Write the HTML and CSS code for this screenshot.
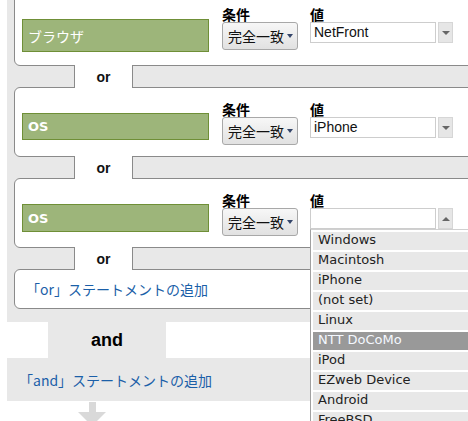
FILE: index.html
```html
<!DOCTYPE html>
<html lang="ja">
<head>
<meta charset="utf-8">
<link rel="stylesheet" href="styles.css">
</head>
<body>
<div class="page">
  <div class="panel">
    <div class="card card-first">
      <div class="attr attr-tall">ブラウザ</div>
      <div class="field cond"><div class="label">条件</div><div class="select">完全一致<span class="caret"></span></div></div>
      <div class="field value"><div class="label">値</div><div class="combo"><div class="input">NetFront</div><div class="toggle"><span class="tri-down"></span></div></div></div>
    </div>
    <div class="sep"><div class="sep-l"></div><div class="sep-m">or</div><div class="sep-r"></div></div>
    <div class="card">
      <div class="attr attr-short">OS</div>
      <div class="field cond"><div class="label">条件</div><div class="select">完全一致<span class="caret"></span></div></div>
      <div class="field value"><div class="label">値</div><div class="combo"><div class="input">iPhone</div><div class="toggle"><span class="tri-down"></span></div></div></div>
    </div>
    <div class="sep"><div class="sep-l"></div><div class="sep-m">or</div><div class="sep-r"></div></div>
    <div class="card">
      <div class="attr">OS</div>
      <div class="field cond"><div class="label">条件</div><div class="select">完全一致<span class="caret"></span></div></div>
      <div class="field value"><div class="label">値</div><div class="combo"><div class="input"></div><div class="toggle"><span class="tri-up"></span></div></div>
        <ul class="list">
          <li>Windows</li>
          <li>Macintosh</li>
          <li>iPhone</li>
          <li>(not set)</li>
          <li>Linux</li>
          <li class="active">NTT DoCoMo</li>
          <li>iPod</li>
          <li>EZweb Device</li>
          <li>Android</li>
          <li>FreeBSD</li>
        </ul>
      </div>
    </div>
    <div class="sep"><div class="sep-l"></div><div class="sep-m">or</div><div class="sep-r"></div></div>
    <div class="card card-add">「or」ステートメントの追加</div>
  </div>
  <div class="and-row"><div class="and-tab">and</div></div>
  <div class="add-and">「and」ステートメントの追加</div>
  <svg class="arrow" width="28" height="22" viewBox="0 0 28 22"><rect x="11" y="0" width="7" height="10" fill="#d9d9d9"/><polygon points="0,10 28,10 14,24" fill="#d9d9d9"/></svg>
</div>
</body>
</html>
```

FILE: styles.css
```css
html, body {
  margin: 0;
  padding: 0;
  background: #ffffff;
  overflow: hidden;
}
.page {
  width: 468px;
  height: 421px;
  overflow: hidden;
  font-family: "DejaVu Sans", "Noto Sans CJK JP", sans-serif;
}
.panel {
  margin-left: 7px;
  margin-top: -9px;
  width: 540px;
  padding: 0 0 13px 7px;
  background: #e8e8e8;
}
.card {
  background: #ffffff;
  border: 1px solid #8a8a8a;
  border-radius: 6px;
  display: flex;
  align-items: flex-start;
  padding: 11px 0 11px 7px;
}
.card-first {
  padding-top: 12px;
  padding-bottom: 13px;
}
.attr {
  box-sizing: border-box;
  width: 187px;
  height: 28px;
  margin-top: 14px;
  background: #9db57a;
  border: 1px solid #6f8f37;
  color: #ffffff;
  font: bold 13px "DejaVu Sans", "Noto Sans CJK JP", sans-serif;
  padding-left: 5px;
  display: flex;
  align-items: center;
}
.attr-tall {
  height: 33px;
  margin-top: 15px;
  font-weight: normal;
  font-size: 14px;
}
.attr-short {
  height: 27px;
}
.field {
  display: flex;
  flex-direction: column;
}
.cond {
  margin-left: 13px;
  width: 76px;
}
.value {
  margin-left: 12px;
  position: relative;
}
.label {
  height: 16px;
  line-height: 16px;
  margin-bottom: 2px;
  font: bold 14px "Noto Sans CJK JP", sans-serif;
  color: #000;
}
.select {
  box-sizing: border-box;
  height: 28px;
  border: 1px solid #a8a8a8;
  border-radius: 3px;
  background: linear-gradient(#f7f7f7, #e1e1e1);
  font: 14px "Noto Sans CJK JP", sans-serif;
  color: #111;
  padding-left: 5px;
  display: flex;
  align-items: center;
}
.caret {
  width: 0;
  height: 0;
  border-left: 3px solid transparent;
  border-right: 3px solid transparent;
  border-top: 4px solid #34456a;
  margin-left: 3px;
}
.combo {
  display: flex;
  gap: 2px;
}
.input {
  box-sizing: border-box;
  width: 126px;
  height: 21px;
  border: 1px solid #cdcdcd;
  background: #fff;
  font: 14px "Liberation Sans", Arial, sans-serif;
  color: #111;
  line-height: 19px;
  padding-left: 3px;
}
.toggle {
  box-sizing: border-box;
  width: 15px;
  height: 21px;
  background: #e6e6e6;
  border: 1px solid #d6d6d6;
  display: flex;
  align-items: center;
  justify-content: center;
}
.tri-down {
  width: 0;
  height: 0;
  border-left: 4px solid transparent;
  border-right: 4px solid transparent;
  border-top: 4px solid #666;
}
.tri-up {
  width: 0;
  height: 0;
  border-left: 4px solid transparent;
  border-right: 4px solid transparent;
  border-bottom: 4px solid #666;
}
.list {
  position: absolute;
  z-index: 5;
  top: 39px;
  left: 0;
  width: 170px;
  margin: 0;
  padding: 2px 0 0 2px;
  list-style: none;
  background: #ffffff;
  border-left: 1px solid #a0a0a0;
  border-top: 1px solid #d0d0d0;
}
.list li {
  height: 18px;
  line-height: 18px;
  margin-bottom: 2px;
  background: #e8e8e8;
  padding-left: 5px;
  font: 13px "DejaVu Sans", sans-serif;
  color: #222;
}
.list li.active {
  background: #999999;
  color: #f4f8ff;
}
.sep {
  display: flex;
  height: 21px;
}
.sep-l {
  box-sizing: border-box;
  width: 61px;
  border-right: 1px solid #8a8a8a;
}
.sep-m {
  width: 57px;
  margin: -1px 0;
  background: #ffffff;
  position: relative;
  font: bold 14px "Liberation Sans", Arial, sans-serif;
  color: #111;
  display: flex;
  align-items: center;
  justify-content: center;
}
.sep-r {
  flex: 1;
  border-left: 1px solid #8a8a8a;
}
.card-add {
  box-sizing: border-box;
  height: 40px;
  padding: 0 0 0 11px;
  align-items: center;
  font: 14px "Noto Sans CJK JP", sans-serif;
  color: #1b5fa8;
}
.and-row {
  height: 36px;
  display: flex;
}
.and-tab {
  margin-left: 48px;
  width: 118px;
  background: #e8e8e8;
  font: bold 18px "Liberation Sans", Arial, sans-serif;
  color: #000;
  display: flex;
  align-items: center;
  justify-content: center;
}
.add-and {
  margin-left: 7px;
  height: 43px;
  background: #e8e8e8;
  display: flex;
  align-items: center;
  padding-left: 12px;
  font: 14px "Noto Sans CJK JP", sans-serif;
  color: #1b5fa8;
}
.arrow {
  display: block;
  margin-left: 78px;
  margin-top: 1px;
}
```
